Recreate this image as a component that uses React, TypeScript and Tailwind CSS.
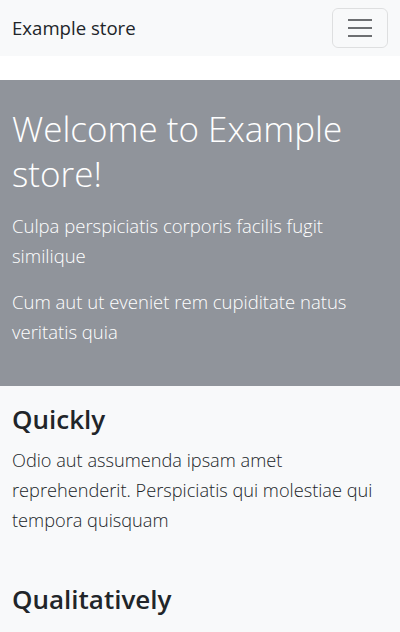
export default function App() {
  const font = { fontFamily: '"Open Sans", "Noto Sans", sans-serif' }
  return (
    <div className="min-h-[632px] bg-[#f8f9fa] text-[#212529]" style={font}>
      <nav className="h-14 bg-[#f8f9fa] px-3 flex items-center justify-between">
        <span className="text-[18.6px] font-normal">Example store</span>
        <button
          type="button"
          className="w-14 h-10 border border-black/10 rounded-md flex flex-col items-center justify-center gap-[6px]"
        >
          <span className="block w-6 h-[2px] bg-[#6d6f72]" />
          <span className="block w-6 h-[2px] bg-[#6d6f72]" />
          <span className="block w-6 h-[2px] bg-[#6d6f72]" />
        </button>
      </nav>
      <div className="h-6 bg-white" />
      <section className="bg-[#90949b] text-white px-3 pt-[26px] pb-[39px]">
        <h1 className="text-[35px] leading-[45px] font-light">Welcome to Example store!</h1>
        <p className="mt-[15px] text-[18.5px] leading-[30px] font-light">
          Culpa perspiciatis corporis facilis fugit similique
        </p>
        <p className="mt-4 text-[18.5px] leading-[30px] font-light">
          Cum aut ut eveniet rem cupiditate natus veritatis quia
        </p>
      </section>
      <section className="px-3 pt-4">
        <h2 className="text-[26px] leading-[34px] font-semibold">Quickly</h2>
        <p className="mt-[9px] text-[18.2px] leading-[30px] font-light">
          Odio aut assumenda ipsam amet reprehenderit. Perspiciatis qui molestiae qui tempora quisquam
        </p>
        <h2 className="mt-[47px] text-[26px] leading-[34px] font-semibold">Qualitatively</h2>
        <p className="mt-2 text-[18.2px] leading-[30px] font-light">
          Dolorem quia sed aspernatur voluptatem neque iure nemo dolores
        </p>
      </section>
    </div>
  )
}
